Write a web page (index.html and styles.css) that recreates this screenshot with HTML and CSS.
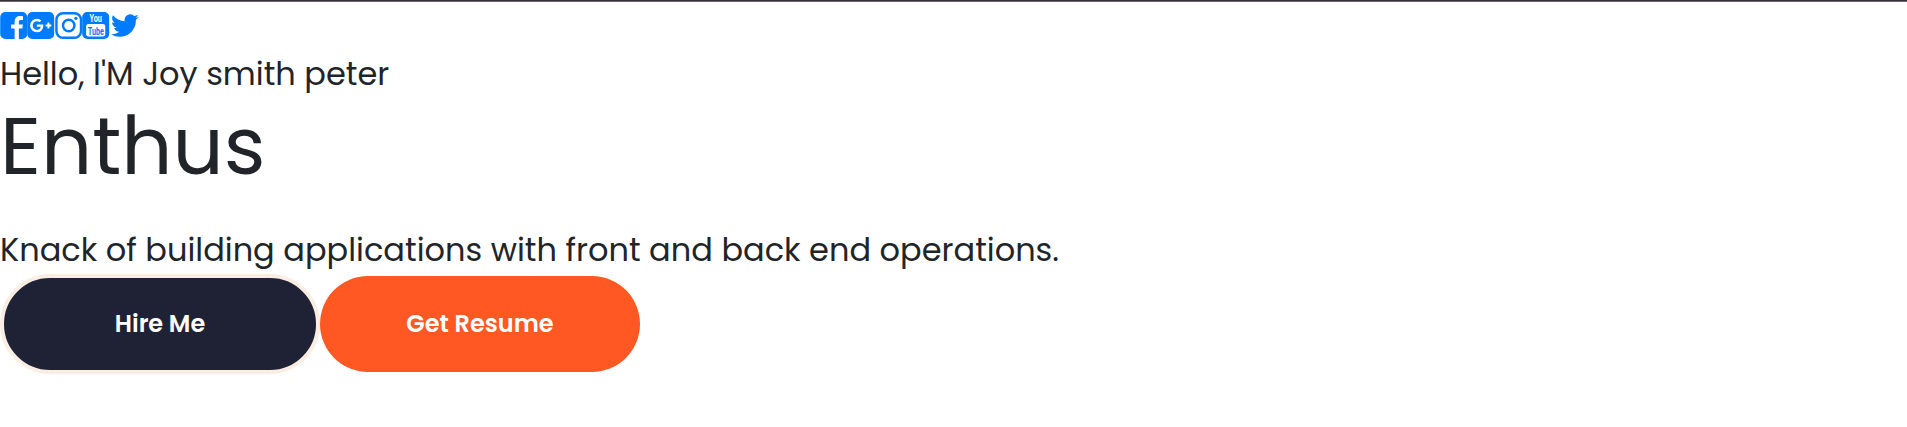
FILE: index.html
```html
<!DOCTYPE html>
<html lang="en">
<head>
<meta charset="utf-8">
<title>Joy smith peter</title>
<link rel="stylesheet" href="styles.css">
</head>
<body>
<main class="profile">
  <nav class="social">
    <a class="social-link" href="#" aria-label="Facebook"><svg class="icon" viewBox="0 128 1536 1536"><path d="M1248 128q119 0 203.500 84.500t84.500 203.500v960q0 119-84.500 203.500t-203.500 84.500h-188v-595h199l30-232h-229v-148q0-56 23.500-84t91.500-28l122-1v-207q-63-9-178-9-136 0-217.500 80t-81.500 226v171h-200v232h200v595h-532q-119 0-203.500-84.500t-84.500-203.500v-960q0-119 84.500-203.500t203.500-84.500h960z"/></svg></a>
    <a class="social-link" href="#" aria-label="Google Plus"><svg class="icon" viewBox="0 128 1536 1536"><path d="M917 905q0-26-6-64h-362v132h217q-3 24-16.500 50t-37.500 53-66.500 44.500-96.500 17.500q-99 0-169-71t-70-171 70-171 169-71q92 0 153 59l104-101q-108-100-257-100-160 0-272 112.500t-112 271.500 112 271.500 272 112.500q165 0 266.500-105t101.500-270zm345 46h109v-110h-109v-110h-110v110h-110v110h110v110h110v-110zm274-535v960q0 119-84.500 203.500t-203.500 84.500h-960q-119 0-203.500-84.500t-84.500-203.500v-960q0-119 84.500-203.500t203.500-84.500h960q119 0 203.500 84.500t84.500 203.500z"/></svg></a>
    <a class="social-link" href="#" aria-label="Instagram"><svg class="icon" viewBox="0 0 1536 1536"><rect class="line" x="69" y="69" width="1398" height="1398" rx="370"/><circle class="line" cx="768" cy="768" r="325"/><circle cx="1178" cy="358" r="92"/></svg></a>
    <a class="social-link" href="#" aria-label="YouTube"><svg class="icon" viewBox="0 0 27.43 27.43"><rect width="27.43" height="27.43" rx="5.1"/><rect class="cutout" x="4" y="12.200" width="19.400" height="12.800" rx="2.400"/><text class="cutout label" x="7.300" y="10.600" textLength="12.600" lengthAdjust="spacingAndGlyphs">You</text><text class="label" x="5.700" y="23" textLength="16.200" lengthAdjust="spacingAndGlyphs">Tube</text></svg></a>
    <a class="social-link" href="#" aria-label="Twitter"><svg class="icon icon-wide" viewBox="64 128 1664 1536"><path d="M1684 408q-67 98-162 167 1 14 1 42 0 130-38 259.500t-115.500 248.500-184.500 210.500-258 146-323 54.500q-271 0-496-145 35 4 78 4 225 0 401-138-105-2-188-64.500t-114-159.500q33 5 61 5 43 0 85-11-112-23-185.500-111.500t-73.500-205.500v-4q68 38 146 41-66-44-105-115t-39-154q0-88 44-163 121 149 294.500 238.500t371.500 99.500q-8-38-8-74 0-134 94.500-228.500t228.500-94.500q140 0 236 102 109-21 205-78-37 115-142 178 93-10 186-50z"/></svg></a>
  </nav>
  <p class="greeting">Hello, I'M Joy smith peter</p>
  <h1 class="role">Enthus</h1>
  <p class="tagline">Knack of building applications with front and back end operations.</p>
  <div class="actions">
    <button class="btn btn-hire">Hire Me</button>
    <button class="btn btn-resume">Get Resume</button>
  </div>
</main>
</body>
</html>
```
FILE: styles.css
```css
* {
  box-sizing: border-box;
}

body {
  margin: 0;
  background: #fff;
  color: #212529;
  font-family: Poppins, Inter, sans-serif;
}

.profile {
  border-top: 1px solid #353139;
  box-shadow: inset 0 1px #6b6670;
  padding-top: 11px;
}

.social {
  display: flex;
  height: 38px;
}

.social-link {
  display: block;
  color: #007bff;
}

.icon {
  display: block;
  width: 27.43px;
  height: 27px;
  fill: currentColor;
  overflow: visible;
}

.icon-wide {
  width: 29.71px;
}

.line {
  fill: none;
  stroke: currentColor;
  stroke-width: 138;
}

.cutout {
  fill: #fff;
}

.label {
  font: 700 12px Roboto, sans-serif;
}

.greeting,
.tagline {
  margin: 0;
  font-size: 32px;
  line-height: 48px;
  white-space: nowrap;
}

.role {
  margin: 0;
  height: 128px;
  font-size: 80px;
  font-weight: 400;
  line-height: 96px;
}

.actions {
  display: flex;
  align-items: center;
}

.btn {
  width: 320px;
  padding: 0 0 2px;
  border: 0;
  border-radius: 50px;
  color: #fff;
  font: inherit;
  font-size: 24px;
  font-weight: 600;
}

.btn-hire {
  height: 100px;
  border: 4px solid #faeee4;
  background: #1f2235;
}

.btn-resume {
  height: 96px;
  background: #ff5823;
}
```
